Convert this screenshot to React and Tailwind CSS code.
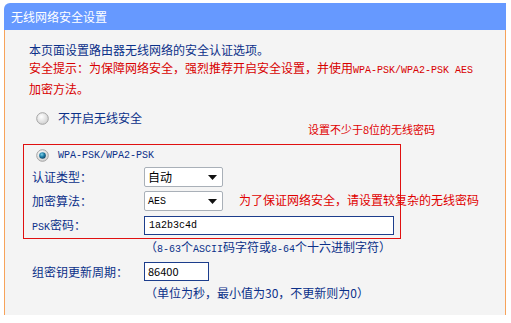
const Radio = ({ checked }) => (
  <svg width="13" height="13" viewBox="0 0 13 13" className="shrink-0">
    <defs>
      <radialGradient id={checked ? "rgc" : "rgu"} cx="0.4" cy="0.35" r="0.7">
        <stop offset="0" stopColor="#ffffff" />
        <stop offset="1" stopColor="#cfcfcf" />
      </radialGradient>
      <radialGradient id="dot" cx="0.4" cy="0.35" r="0.7">
        <stop offset="0" stopColor="#7fd0e8" />
        <stop offset="0.5" stopColor="#1d7fa8" />
        <stop offset="1" stopColor="#0c3d5e" />
      </radialGradient>
    </defs>
    <circle cx="6.5" cy="6.5" r="5.8" fill={`url(#${checked ? "rgc" : "rgu"})`} stroke="#a4a4a4" strokeWidth="1" />
    {checked && <circle cx="6.5" cy="6.5" r="3.3" fill="url(#dot)" />}
  </svg>
);

const Arrow = () => (
  <svg width="9" height="5" viewBox="0 0 9 5" className="shrink-0">
    <path d="M0 0 H9 L4.5 5 Z" fill="#111" />
  </svg>
);

const Mono = ({ children }) => (
  <span className="font-['Liberation_Mono',monospace] text-[10px]">{children}</span>
);

export default function App() {
  return (
    <div className="w-[511px] h-[323px] bg-white pt-[3px] pl-[4px] font-['Noto_Sans_CJK_SC','Liberation_Sans',sans-serif] text-[12px]">
      <div className="w-[502px]">
        <div className="h-[27px] bg-[#6699ff] rounded-tl-[6px] flex items-center pl-[7px] text-white text-[12px] leading-none">
          无线网络安全设置
        </div>
        <div className="relative h-[285px] bg-[#f4f4f4] border-x border-[#f7a35a] pt-[11px]">
          <div className="ml-[24px] leading-[18px] text-[#0b3089]">本页面设置路由器无线网络的安全认证选项。</div>
          <div className="ml-[24px] leading-[18px] text-[#d80000] whitespace-nowrap">
            安全提示：为保障网络安全，强烈推荐开启安全设置，并使用<Mono>WPA-PSK/WPA2-PSK AES</Mono>
          </div>
          <div className="ml-[24px] leading-[18px] text-[#d80000]">加密方法。</div>

          <div className="mt-[10px] h-[20px] ml-[31px] flex items-center gap-[9px] text-[#0b3089]">
            <Radio />
            <span>不开启无线安全</span>
          </div>

          <div className="mt-[16px] ml-[18px] w-[378px] h-[95px] border border-[#e01010]">
            <div className="h-[20px] ml-[12px] flex items-center gap-[9px] text-[#0b3089]">
              <Radio checked />
              <Mono>WPA-PSK/WPA2-PSK</Mono>
            </div>
            <div className="h-[24px] pl-[8px] flex items-center text-[#0b3089]">
              <span className="w-[112px]">认证类型：</span>
              <div className="w-[79px] h-[20px] bg-white border border-[#a9b0b8] rounded-[2px] flex items-center justify-between pl-[3px] pr-[5px] text-black">
                <span>自动</span>
                <Arrow />
              </div>
            </div>
            <div className="h-[24px] pl-[8px] flex items-center text-[#0b3089]">
              <span className="w-[112px]">加密算法：</span>
              <div className="w-[79px] h-[20px] bg-white border border-[#a9b0b8] rounded-[2px] flex items-center justify-between pl-[3px] pr-[5px] text-black">
                <Mono>AES</Mono>
                <Arrow />
              </div>
            </div>
            <div className="h-[24px] pl-[8px] flex items-center text-[#0b3089]">
              <span className="w-[112px]"><Mono>PSK</Mono>密码：</span>
              <div className="w-[250px] h-[19px] bg-white border border-[#1c3d8c] flex items-center pl-[4px] text-black">
                <Mono>1a2b3c4d</Mono>
              </div>
            </div>
          </div>

          <div className="ml-[140px] h-[16px] leading-[16px] text-[#0b3089] whitespace-nowrap">
            （<Mono>8-63</Mono>个<Mono>ASCII</Mono>码字符或<Mono>8-64</Mono>个十六进制字符）
          </div>

          <div className="mt-[7px] h-[19px] ml-[27px] flex items-center text-[#0b3089]">
            <span className="w-[112px]">组密钥更新周期：</span>
            <div className="w-[65px] h-[19px] bg-white border border-[#1c3d8c] flex items-center pl-[3px] text-black text-[11px]">
              86400
            </div>
          </div>

          <div className="mt-[3px] ml-[140px] h-[18px] leading-[18px] text-[#0b3089] whitespace-nowrap">
            （单位为秒，最小值为30，不更新则为0）
          </div>

          <div className="absolute top-[92px] left-[303px] text-[11px] leading-[14px] text-[#e00000] whitespace-nowrap">
            设置不少于8位的无线密码
          </div>
          <div className="absolute top-[162px] left-[234px] text-[12px] leading-[16px] text-[#e00000] whitespace-nowrap">
            为了保证网络安全，请设置较复杂的无线密码
          </div>
        </div>
      </div>
    </div>
  );
}
